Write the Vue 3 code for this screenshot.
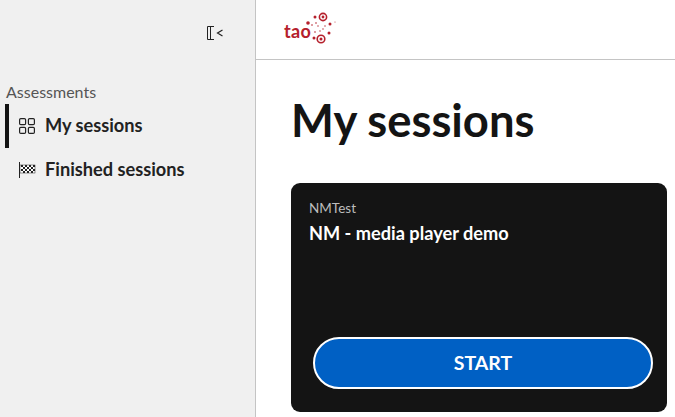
<template>
  <div class="layout">
    <aside class="sidebar">
      <div class="collapse-row">
        <button class="btn-collapse" aria-label="Collapse panel">
          <svg width="16" height="14" viewBox="0 0 16 14" fill="none" stroke="#222" stroke-width="1">
            <path d="M7 .5H.5v13H7M3.500 .5v13" />
            <path d="M15.500 4 10.500 7l5 3" stroke-width="1.200" />
          </svg>
        </button>
      </div>
      <div class="nav-title">Assessments</div>
      <ul class="nav">
        <li class="nav-item active">
          <svg class="nav-icon" width="16" height="16" viewBox="0 0 16 16" fill="none" stroke="#222" stroke-width="1.200">
            <rect x=".6" y=".6" width="6" height="6" rx="1.200" />
            <rect x="9.400" y=".6" width="6" height="6" rx="1.200" />
            <rect x=".6" y="9.400" width="6" height="6" rx="1.200" />
            <rect x="9.400" y="9.400" width="6" height="6" rx="1.200" />
          </svg>
          <span class="nav-label">My sessions</span>
        </li>
        <li class="nav-item">
          <svg class="nav-icon" width="16" height="16" viewBox="0 0 16 16" fill="none">
            <path d="M.5 0v16" stroke="#222" />
            <rect x="1" y="3" width="15" height="8" fill="#fff" stroke="#222" stroke-width=".5" />
            <path d="M2 3h2v2H2zM6 3h2v2H6zM10 3h2v2h-2zM14 3h2v2h-2zM4 5h2v2H4zM8 5h2v2H8zM12 5h2v2h-2zM2 7h2v2H2zM6 7h2v2H6zM10 7h2v2h-2zM14 7h2v2h-2zM4 9h2v2H4zM8 9h2v2H8zM12 9h2v2h-2z" fill="#222" />
          </svg>
          <span class="nav-label">Finished sessions</span>
        </li>
      </ul>
    </aside>

    <div class="main">
      <header class="topbar">
        <div class="logo">
          <span class="logo-text">tao</span>
          <svg class="logo-mark" width="30" height="32" viewBox="0 0 30 32" fill="#b5202c">
            <circle cx="16" cy="4" r="3.600" fill="none" stroke="#b5202c" stroke-width="1.600" />
            <circle cx="16" cy="4" r="1.400" />
            <circle cx="14" cy="26" r="3.800" fill="none" stroke="#b5202c" stroke-width="1.600" />
            <circle cx="14" cy="26" r="1.500" />
            <circle cx="8" cy="4" r="1.500" />
            <circle cx="1" cy="10" r="1.800" />
            <circle cx="23" cy="11" r="1.500" />
            <circle cx="7" cy="25" r="1.500" />
            <circle cx="22" cy="20" r="1.500" />
            <circle cx="5" cy="12" r=".8" />
            <circle cx="9" cy="10" r=".8" />
            <circle cx="11" cy="13" r=".7" />
            <circle cx="8" cy="19" r=".8" />
            <circle cx="13" cy="18" r=".7" />
            <circle cx="16" cy="16" r=".7" />
            <circle cx="18" cy="13" r=".7" />
            <circle cx="28" cy="9" r=".5" />
          </svg>
        </div>
      </header>

      <main class="content">
        <h1>My sessions</h1>
        <section v-for="session in sessions" :key="session.id" class="card">
          <div class="card-label">{{ session.label }}</div>
          <div class="card-title">{{ session.title }}</div>
          <button class="btn-start">START</button>
        </section>
      </main>
    </div>
  </div>
</template>

<script setup>
const sessions = [{ id: 1, label: "NMTest", title: "NM - media player demo" }];
</script>

<style>
body {
  overflow: hidden;
}
</style>

<style scoped>
.layout {
  display: flex;
  width: 675px;
  height: 417px;
  overflow: hidden;
  background: #fff;
  color: #141414;
  font-family: "Lato", "Open Sans", sans-serif;
}

.sidebar {
  box-sizing: border-box;
  width: 256px;
  flex-shrink: 0;
  background: #f0f0f0;
  border-right: 1px solid #c4c4c4;
}

.collapse-row {
  display: flex;
  justify-content: flex-end;
  height: 81px;
  padding: 26px 32px 0 0;
  box-sizing: border-box;
}

.btn-collapse {
  width: 16px;
  height: 14px;
  padding: 0;
  background: none;
  border: none;
  cursor: pointer;
}

.nav-title {
  padding-left: 6px;
  margin-bottom: 2px;
  font-size: 16px;
  line-height: 21px;
  color: #555;
}

.nav {
  list-style: none;
  margin: 0;
  padding: 0 0 0 5px;
}

.nav-item {
  display: flex;
  align-items: center;
  height: 44px;
  padding-left: 10px;
  border-left: 4px solid transparent;
  font-size: 18.200px;
  font-weight: 700;
  color: #222;
}

.nav-item.active {
  border-left-color: #141414;
}

.nav-icon {
  flex-shrink: 0;
  overflow: visible;
  margin-right: 10px;
}

.nav-label {
  margin-top: -2px;
}

.main {
  flex: 1;
  min-width: 0;
}

.topbar {
  box-sizing: border-box;
  height: 60px;
  padding: 13px 0 0 28px;
  border-bottom: 1px solid #c4c4c4;
}

.logo {
  display: flex;
  align-items: center;
  height: 32px;
}

.logo-text {
  font-size: 18px;
  font-weight: 700;
  line-height: 1;
  letter-spacing: 0.3px;
  color: #b5202c;
  margin-top: 4px;
}

.logo-mark {
  overflow: visible;
  margin-left: -4px;
}

.content {
  padding: 0 8px 0 35px;
}

h1 {
  margin: 0;
  padding-top: 33px;
  font-size: 45.400px;
  line-height: 54px;
  font-weight: 700;
}

.card {
  display: flex;
  flex-direction: column;
  box-sizing: border-box;
  height: 229px;
  margin-top: 36px;
  padding: 17px 14px 23px 18px;
  background: #141414;
  border-radius: 9px;
}

.card-label {
  font-size: 13.500px;
  line-height: 16px;
  color: #bdbdbd;
}

.card-title {
  margin-top: 6px;
  font-size: 18.200px;
  line-height: 22px;
  font-weight: 700;
  color: #fff;
}

.btn-start {
  box-sizing: border-box;
  width: 340px;
  height: 52px;
  margin-top: auto;
  margin-left: 4px;
  padding-bottom: 3px;
  background: #0060c4;
  border: 2px solid #fff;
  border-radius: 26px;
  color: #fff;
  font-family: inherit;
  font-size: 19.500px;
  font-weight: 700;
  cursor: pointer;
}
</style>
